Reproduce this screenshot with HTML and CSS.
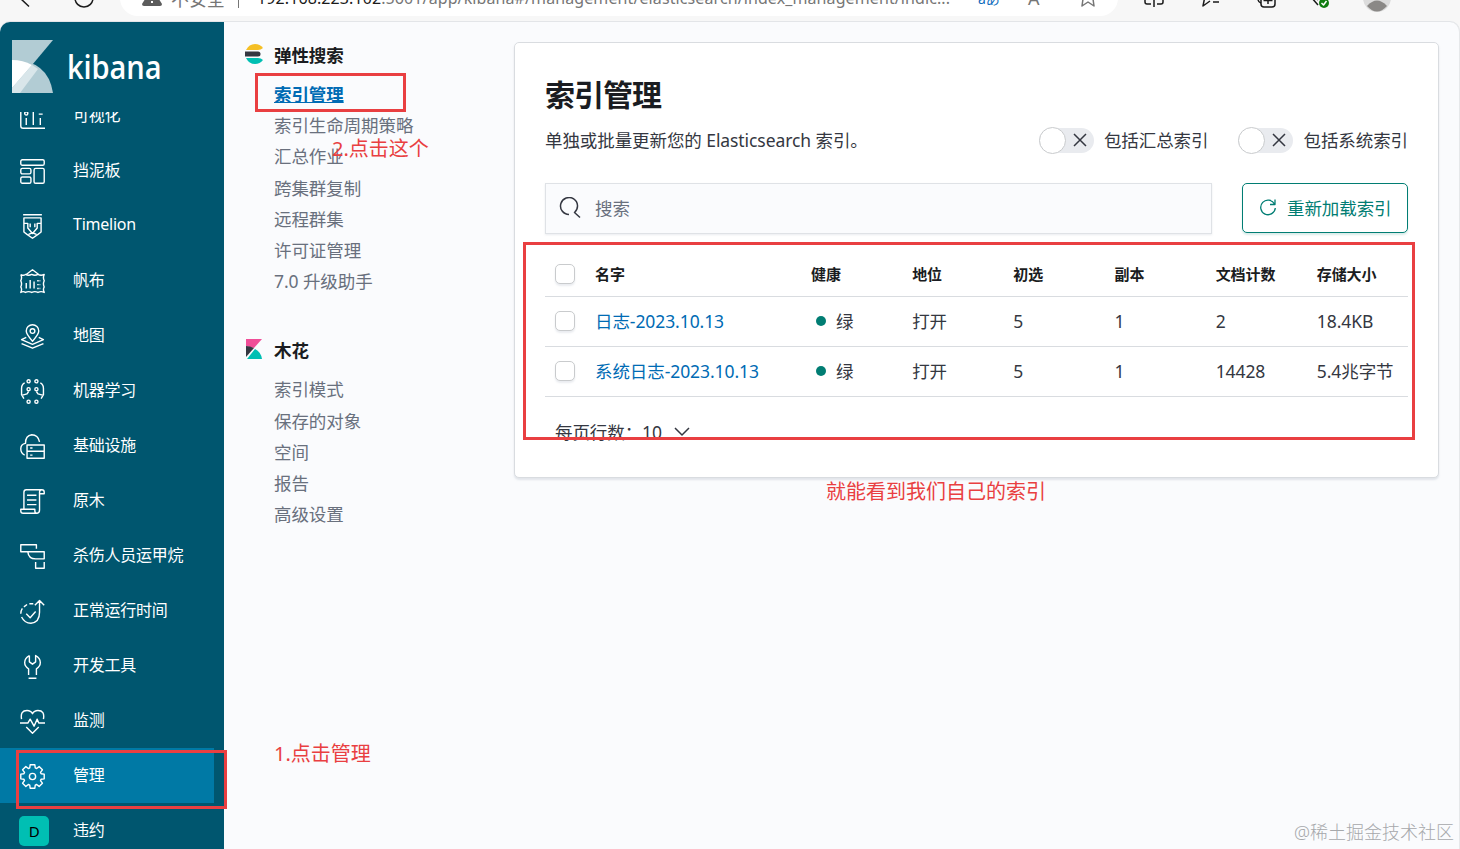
FILE: index.html
```html
<!DOCTYPE html>
<html lang="zh-CN">
<head>
    <meta charset="UTF-8">
    <meta name="viewport" content="width=device-width, initial-scale=1.0">
    <title>Kibana</title>
    <link rel="stylesheet" href="styles.css">
</head>
<body>
    <div class="toolbar">
        <div class="toolbar-row">
            <svg class="tool back" width="20" height="20" viewBox="0 0 20 20"><path d="M11 1 2 10l9 8.500M2 10h17"/></svg>
            <svg class="tool reload" width="22" height="22" viewBox="0 0 22 22"><circle cx="11" cy="11" r="9"/></svg>
            <div class="address">
                <svg class="warn" width="20" height="18" viewBox="0 0 20 18"><path d="M10 0 20 16q0 2-2 2H2q-2 0-2-2Z" fill="#5c5c5c"/><path d="M10 5v6M10 13v2" stroke="#fff" stroke-width="2"/></svg>
                <span class="insecure">不安全</span>
                <span class="divider"></span>
                <span class="url"><b>192.168.223.102</b>:5601/app/kibana#/management/elasticsearch/index_management/indic...</span>
                <span class="translate">aあ</span>
                <span class="read">A</span>
                <svg class="tool star" width="18" height="20" viewBox="0 0 18 20"><path d="M3 18 4 11 1 7l5-1 3-5 3 5 5 1-3 4 1 7-6-4Z"/></svg>
            </div>
            <svg class="tool split" width="20" height="20" viewBox="0 0 20 20"><path d="M7 2H3q-2 0-2 2v10q0 2 2 2h4M13 2h4q2 0 2 2v10q0 2-2 2h-4M10 0v19"/></svg>
            <svg class="tool fav" width="20" height="20" viewBox="0 0 20 20"><path d="M5 3 2 18l7-5M12 14h6"/></svg>
            <svg class="tool collect" width="20" height="20" viewBox="0 0 20 20"><rect x="5" y="4" width="14" height="15" rx="3"/><path d="M12 7v9M7.500 12.500h9M5 15q-3-1-3-4"/></svg>
            <svg class="tool pulse" width="20" height="20" viewBox="0 0 20 20"><path d="m1 9 7 8M5 9l3 3"/><circle cx="14" cy="15" r="5" fill="#107c10" stroke="none"/><path d="m11.500 15 2 2 3-4" stroke="#fff"/></svg>
            <svg class="avatar" width="28" height="28" viewBox="0 0 28 28"><circle cx="14" cy="14" r="14" fill="#dcdcdc"/><path d="M4 22q10-11 20 0-10 11-20 0Z" fill="#8a8886"/></svg>
        </div>
    </div>

    <div class="page">
        <nav class="sidebar">
            <div class="brand">
                <svg width="41" height="53" viewBox="0 0 41 53">
                    <path d="M0 0h41L0 49Z" fill="#b2ccd4"/>
                    <path d="M0 20Q36 20 41 53H0Z" fill="#b2ccd4"/>
                    <path d="M0 20q11 0 20 5L0 48Z" fill="#fff"/>
                    <path d="m20 25 6 4L8 53H0v-5Z" fill="#d9e6ea"/>
                </svg>
                <span>kibana</span>
            </div>
            <div class="menu-clip">
                <ul class="menu">
                    <li><svg viewBox="0 0 32 32"><path d="M1 0v28q0 3 3 3h28M8 18v9M17 9v18M26 18v9"/><circle cx="8" cy="12" r="2"/><path d="M24 13h5"/></svg><span>可视化</span></li>
                    <li><svg viewBox="0 0 32 32"><rect x="1" y="1" width="30" height="7" rx="2"/><rect x="1" y="12" width="13" height="7" rx="2"/><rect x="1" y="23" width="13" height="8" rx="2"/><rect x="18" y="12" width="13" height="19" rx="2"/></svg><span>挡泥板</span></li>
                    <li><svg viewBox="0 0 32 32"><path d="M4 1h24M5 5h22v18l-4 3-7 5-7-5-4-3ZM5 12h5v6l6 7 6-7v-6h5M13 12v5M19 12v5M11 26l5-2 5 2"/></svg><span>Timelion</span></li>
                    <li><svg viewBox="0 0 32 32"><path d="m8 7 8-6 8 6M1 7q3 2 6 0 4 2 8 0 4 2 8 0 4 2 8 0-2 4 0 8-2 4 0 8-2 3 0 7-4-2-8 0-4-2-8 0-4-2-8 0-3-2-6 0 2-4 0-7 2-4 0-8 2-4 0-8M8 18v7M13 14v11M18 16v9"/><path d="M22 15h4M22 20h4M22 25h4" stroke-dasharray="2 1"/></svg><span>帆布</span></li>
                    <li><svg viewBox="0 0 32 32"><path d="M16 22Q8 13 8 9a8 8 0 0 1 16 0q0 4-8 13Z"/><circle cx="16" cy="9" r="3"/><path d="m8 17-6 3 14 6 14-6-6-3M2 25l14 6 14-6"/></svg><span>地图</span></li>
                    <li><svg viewBox="0 0 32 32"><circle cx="11" cy="3" r="2"/><circle cx="21" cy="3" r="2"/><circle cx="11" cy="13" r="2"/><circle cx="21" cy="13" r="2"/><circle cx="11" cy="29" r="2"/><circle cx="21" cy="29" r="2"/><path d="M6 5Q2 7 2 12v8l3 5M26 5q4 2 4 7v8l-3 5M2 21l7-2 2-3M30 21l-7-2-2-3"/></svg><span>机器学习</span></li>
                    <li><svg viewBox="0 0 32 32"><path d="M6 27Q1 25 1 19t6-7Q7 2 15 1q8 0 10 9"/><path d="M9 14h22v17H9ZM9 22h22M13 18h3M13 27h3"/></svg><span>基础设施</span></li>
                    <li><svg viewBox="0 0 32 32"><path d="M5 25V4q0-3 3-3h20q3 0 3 3v2h-6v21q0 4-3 4H4q-3 0-3-3v-2h18v2q0 3 3 3M25 6V4q0-3 3-3M9 8h12M9 14h12M9 20h12"/></svg><span>原木</span></li>
                    <li><svg viewBox="0 0 32 32"><path d="M21 6V1H1v9h9M10 10h21v9H20q-9 0-10-9ZM20 23v8h11v-8"/></svg><span>杀伤人员运甲烷</span></li>
                    <li><svg viewBox="0 0 32 32"><path d="M2 23q4 8 12 8 11-1 11-14V2M19 8l6-6 6 6M8 19l5 5 7-8M1 19q0-4 2-7M5 10l4-3M12 6h5"/></svg><span>正常运行时间</span></li>
                    <li><svg viewBox="0 0 32 32"><path d="M12 2v8l4 3 4-3V2q6 3 6 9 0 5-5 8v8M12 2Q6 5 6 11q0 5 5 8v8M11 31h10"/></svg><span>开发工具</span></li>
                    <li><svg viewBox="0 0 32 32"><path d="M2 13Q0 2 9 2q5 0 7 4 2-4 7-4 9 0 7 11M0 18h10l3-5 5 9 4-9 2 5h8M8 23l8 8 8-8"/></svg><span>监测</span></li>
                    <li class="active"><svg viewBox="0 0 32 32"><path d="M12.500 5 13 1h6l.5 4 1.800.75 3.200-2.450 4.200 4.200-2.450 3.200.75 1.800 4 .5v6l-4 .5-.75 1.800 2.450 3.200-4.200 4.200-3.200-2.450-1.800.75-.5 4h-6l-.5-4-1.800-.75-3.200 2.450-4.200-4.200 2.450-3.200L5 19.500 1 19v-6l4-.5.75-1.800L3.300 7.500l4.200-4.200 3.200 2.450Z"/><circle cx="16" cy="16" r="4"/></svg><span>管理</span></li>
                    <li><i class="space">D</i><span>违约</span></li>
                </ul>
            </div>
        </nav>

        <main class="content">
            <aside class="subnav">
                <h2>
                    <svg width="18" height="20" viewBox="0 0 18 20"><path d="M1 6q3-6 9-6 5 0 8 4-2 2-5 2Z" fill="#f5bf25"/><path d="M0 7.500h13a2.500 2.500 0 0 1 0 5H0Z" fill="#343741"/><path d="M1 14h12q3 0 5 2-3 4-8 4-6 0-9-6Z" fill="#00bfb3"/></svg>
                    弹性搜索
                </h2>
                <ul>
                    <li class="current">索引管理</li>
                    <li>索引生命周期策略</li>
                    <li>汇总作业</li>
                    <li>跨集群复制</li>
                    <li>远程群集</li>
                    <li>许可证管理</li>
                    <li>7.0 升级助手</li>
                </ul>
                <h2>
                    <svg width="18" height="20" viewBox="0 0 18 20"><path d="M1 0h16L9 9 1 7Z" fill="#f04e98"/><path d="M1 7q4 0 8 2l-8 9Z" fill="#343741"/><path d="m10 10-8 10h15q-1-7-7-10Z" fill="#00bfb3"/></svg>
                    木花
                </h2>
                <ul>
                    <li>索引模式</li>
                    <li>保存的对象</li>
                    <li>空间</li>
                    <li>报告</li>
                    <li>高级设置</li>
                </ul>
            </aside>

            <section class="panel">
                <h1>索引管理</h1>
                <div class="intro">
                    <p>单独或批量更新您的 Elasticsearch 索引。</p>
                    <div class="switch"><span class="track"><svg width="14" height="14" viewBox="0 0 14 14"><path d="m1 1 12 12M13 1 1 13"/></svg></span>包括汇总索引</div>
                    <div class="switch"><span class="track"><svg width="14" height="14" viewBox="0 0 14 14"><path d="m1 1 12 12M13 1 1 13"/></svg></span>包括系统索引</div>
                </div>
                <div class="filters">
                    <div class="search">
                        <svg width="22" height="22" viewBox="0 0 22 22"><path d="M10 17.500A8.500 8.500 0 1 1 15.500 15.500L21 20.500"/></svg>
                        搜索
                    </div>
                    <button class="reload-btn">
                        <svg width="18" height="18" viewBox="0 0 18 18"><path d="M15.500 6A7.300 7.300 0 1 0 16.300 10M16 1.500V6.500H11"/></svg>
                        重新加载索引
                    </button>
                </div>
                <table>
                    <thead>
                        <tr>
                            <th class="check"><span class="box"></span></th>
                            <th class="name">名字</th>
                            <th>健康</th>
                            <th>地位</th>
                            <th>初选</th>
                            <th>副本</th>
                            <th>文档计数</th>
                            <th>存储大小</th>
                        </tr>
                    </thead>
                    <tbody>
                        <tr>
                            <td><span class="box"></span></td>
                            <td class="link">日志-2023.10.13</td>
                            <td><span class="health"></span>绿</td>
                            <td>打开</td>
                            <td>5</td>
                            <td>1</td>
                            <td>2</td>
                            <td>18.4KB</td>
                        </tr>
                        <tr>
                            <td><span class="box"></span></td>
                            <td class="link">系统日志-2023.10.13</td>
                            <td><span class="health"></span>绿</td>
                            <td>打开</td>
                            <td>5</td>
                            <td>1</td>
                            <td>14428</td>
                            <td>5.4兆字节</td>
                        </tr>
                    </tbody>
                </table>
                <div class="pager">
                    每页行数：10
                    <svg width="16" height="10" viewBox="0 0 16 10"><path d="m1 1 7 7 7-7"/></svg>
                </div>
            </section>
        </main>
    </div>

    <!-- 标注 -->
    <div class="mark mark-manage"></div>
    <div class="mark mark-index"></div>
    <div class="mark mark-table"></div>
    <div class="note note-manage">1.点击管理</div>
    <div class="note note-index">2.点击这个</div>
    <div class="note note-table">就能看到我们自己的索引</div>
    <div class="watermark">@稀土掘金技术社区</div>
</body>
</html>
```
FILE: styles.css
```css
* {
    box-sizing: border-box;
}
body {
    margin: 0;
    width: 1460px;
    height: 849px;
    overflow: hidden;
    position: relative;
    background-color: #f7f7f7;
    color: #343741;
    font-family: "Noto Sans", "Noto Sans CJK SC", sans-serif;
    font-size: 17.5px;
    font-weight: 400;
    letter-spacing: -0.08px;
}
h1, h2, p, ul {
    margin: 0;
    padding: 0;
}
ul {
    list-style: none;
}
svg {
    flex-shrink: 0;
    fill: none;
    stroke-linejoin: round;
}

/* 浏览器工具栏 */
.toolbar {
    height: 22px;
    overflow: hidden;
}
.toolbar-row {
    display: flex;
    align-items: center;
    height: 36px;
    margin-top: -20px;
}
.tool {
    stroke: #1b1b1b;
    stroke-width: 1.5;
}
.back {
    margin-left: 18px;
}
.reload {
    margin-left: 35px;
}
.address {
    display: flex;
    align-items: center;
    width: 998px;
    height: 36px;
    margin-left: 25px;
    padding-left: 22px;
    border-radius: 18px;
    background-color: #fff;
    color: #767676;
    white-space: nowrap;
}
.address span {
    flex-shrink: 0;
}
.warn {
    margin-top: -2px;
}
.insecure {
    width: 67px;
    padding-left: 9px;
    font-size: 18px;
}
.divider {
    width: 1px;
    height: 20px;
    margin-left: 9px;
    background-color: #767676;
}
.url {
    width: 739px;
    padding-left: 18px;
    font-size: 16px;
    letter-spacing: 0.1px;
}
.url b {
    color: #1b1b1b;
    font-weight: 400;
}
.translate {
    width: 50px;
    color: #0f6cbd;
    font-size: 14px;
}
.read {
    width: 51px;
    font-size: 18px;
}
.star {
    stroke: #767676;
}
.split {
    margin-left: 26px;
}
.fav {
    margin-left: 37px;
}
.collect {
    margin-left: 35px;
}
.pulse {
    margin-left: 34px;
}
.avatar {
    margin-left: 33px;
}

/* 页面 */
.page {
    display: flex;
    width: 1460px;
    height: 827px;
    overflow: hidden;
    border-right: 1px solid #e6e8ea;
    border-radius: 10px 10px 0 0;
    background-color: #fafbfd;
    box-shadow: 0 -1px 0 #e3e5e8;
}
.sidebar {
    width: 224px;
    background-color: #00566f;
    color: #fff;
}
.brand {
    display: flex;
    align-items: center;
    gap: 14px;
    height: 90px;
    padding: 0 0 2px 12px;
    font-family: "Open Sans", sans-serif;
    font-size: 33px;
    font-weight: 600;
}
.brand span {
    transform: scaleX(0.88);
    transform-origin: left;
}
.menu-clip {
    height: 737px;
    overflow: hidden;
}
.menu {
    margin-top: -24px;
}
.menu li {
    display: flex;
    align-items: center;
    height: 55px;
    padding-left: 20px;
    font-size: 16px;
    letter-spacing: -0.25px;
}
.menu li span {
    padding-bottom: 4px;
}
.menu li svg {
    width: 25px;
    height: 25px;
    margin-top: 2px;
    margin-right: 28px;
    stroke: #fff;
    stroke-width: 1.8;
}
.menu .active {
    width: 214px;
    background-color: #0079a5;
}
.space {
    width: 30px;
    height: 30px;
    margin: 1px 24px 0 -1px;
    border-radius: 5px;
    background-color: #00bfb3;
    color: #000;
    font-size: 15px;
    font-style: normal;
    line-height: 30px;
    text-align: center;
}

.content {
    display: flex;
    align-items: flex-start;
    padding: 20px 20px 0 21px;
}
.subnav {
    width: 269px;
    color: #69707d;
}
.subnav h2 {
    display: flex;
    align-items: center;
    gap: 11px;
    height: 24px;
    margin-bottom: 13px;
    color: #1a1c21;
    font-size: 17.5px;
    font-weight: 700;
    letter-spacing: -0.1px;
}
.subnav li {
    height: 31.2px;
    padding-left: 29px;
    line-height: 31.2px;
}
.subnav ul + h2 {
    margin-top: 40px;
}
.subnav .current {
    color: #006bb4;
    font-weight: 700;
    text-decoration: underline;
}

.panel {
    width: 925px;
    height: 436px;
    padding: 30px;
    border: 1px solid #d9dce0;
    border-radius: 5px;
    background-color: #fff;
    box-shadow: 0 2px 2px rgba(152, 162, 179, 0.25);
}
.panel h1 {
    height: 45px;
    color: #1a1c21;
    font-size: 30px;
    font-weight: 700;
    line-height: 43px;
    letter-spacing: -1px;
}
.intro {
    display: flex;
    align-items: center;
    height: 26px;
    margin: 9px 0 30px;
}
.intro p {
    flex: 1;
    padding-bottom: 2px;
}
.switch {
    display: flex;
    align-items: center;
    gap: 10px;
    margin-left: 30px;
    line-height: 24px;
}
.track {
    display: flex;
    align-items: center;
    width: 55px;
    height: 25px;
    border-radius: 13px;
    background-color: #e9ebef;
}
.track::before {
    content: "";
    width: 25px;
    height: 25px;
    margin-right: 7px;
    border: 1px solid #c9cbcd;
    border-radius: 50%;
    background-color: #fff;
}
.track svg, .search svg, .pager svg {
    stroke: #343741;
    stroke-width: 1.5;
}
.filters {
    display: flex;
    gap: 30px;
}
.search {
    display: flex;
    align-items: center;
    gap: 14px;
    width: 667px;
    height: 51px;
    padding: 0 0 2px 13px;
    border: 1px solid #dfe2e6;
    background-color: #fafbfd;
    box-shadow: 0 1px 2px rgba(152, 162, 179, 0.2);
    color: #69707d;
}
.reload-btn {
    display: flex;
    align-items: center;
    gap: 10px;
    width: 166px;
    height: 50px;
    padding: 0 0 2px 16px;
    border: 1px solid #017d73;
    border-radius: 5px;
    background-color: #fff;
    box-shadow: 0 2px 2px rgba(1, 125, 115, 0.15);
    color: #017d73;
    font: inherit;
    letter-spacing: -0.08px;
    white-space: nowrap;
}
.reload-btn svg {
    stroke: #017d73;
    stroke-width: 1.3;
}

table {
    width: 863px;
    margin-top: 12px;
    border-collapse: separate;
    border-spacing: 0;
    table-layout: fixed;
}
th, td {
    height: 50px;
    padding: 0 0 2px 10px;
    border-bottom: 1px solid #d9dce0;
    text-align: left;
    white-space: nowrap;
}
th {
    height: 51px;
    padding: 5px 0 0 10px;
    color: #1a1c21;
    font-size: 15px;
    font-weight: 700;
}
.check {
    width: 40px;
}
.name {
    width: 216px;
}
.link {
    color: #006bb4;
}
.box {
    display: block;
    width: 20px;
    height: 20px;
    border: 1px solid #c9cbcd;
    border-radius: 5px;
    background-color: #fff;
    box-shadow: 0 2px 2px rgba(152, 162, 179, 0.2);
}
.health {
    display: inline-block;
    width: 10px;
    height: 10px;
    margin: 0 10px 2px 5px;
    border-radius: 50%;
    background-color: #017d73;
}
.pager {
    display: flex;
    align-items: center;
    gap: 12px;
    height: 30px;
    margin-top: 19px;
    padding-left: 10px;
}
.pager svg {
    margin-top: 2px;
}

/* 红色标注 */
.mark {
    position: absolute;
    border: 3px solid #e93f41;
}
.mark-manage {
    left: 16px;
    top: 750px;
    width: 211px;
    height: 59px;
}
.mark-index {
    left: 255px;
    top: 73px;
    width: 151px;
    height: 39px;
}
.mark-table {
    left: 523px;
    top: 242px;
    width: 892px;
    height: 198px;
}
.note {
    position: absolute;
    color: #e93f41;
    font-size: 20px;
    line-height: 28px;
    letter-spacing: 0;
    white-space: nowrap;
}
.note-manage {
    left: 274px;
    top: 740px;
}
.note-index {
    left: 332px;
    top: 135px;
}
.note-table {
    left: 826px;
    top: 478px;
}
.watermark {
    position: absolute;
    right: 6px;
    bottom: 4px;
    color: #a6a8ab;
    font-size: 18px;
    font-weight: 300;
    line-height: 26px;
    letter-spacing: 0;
}
```
